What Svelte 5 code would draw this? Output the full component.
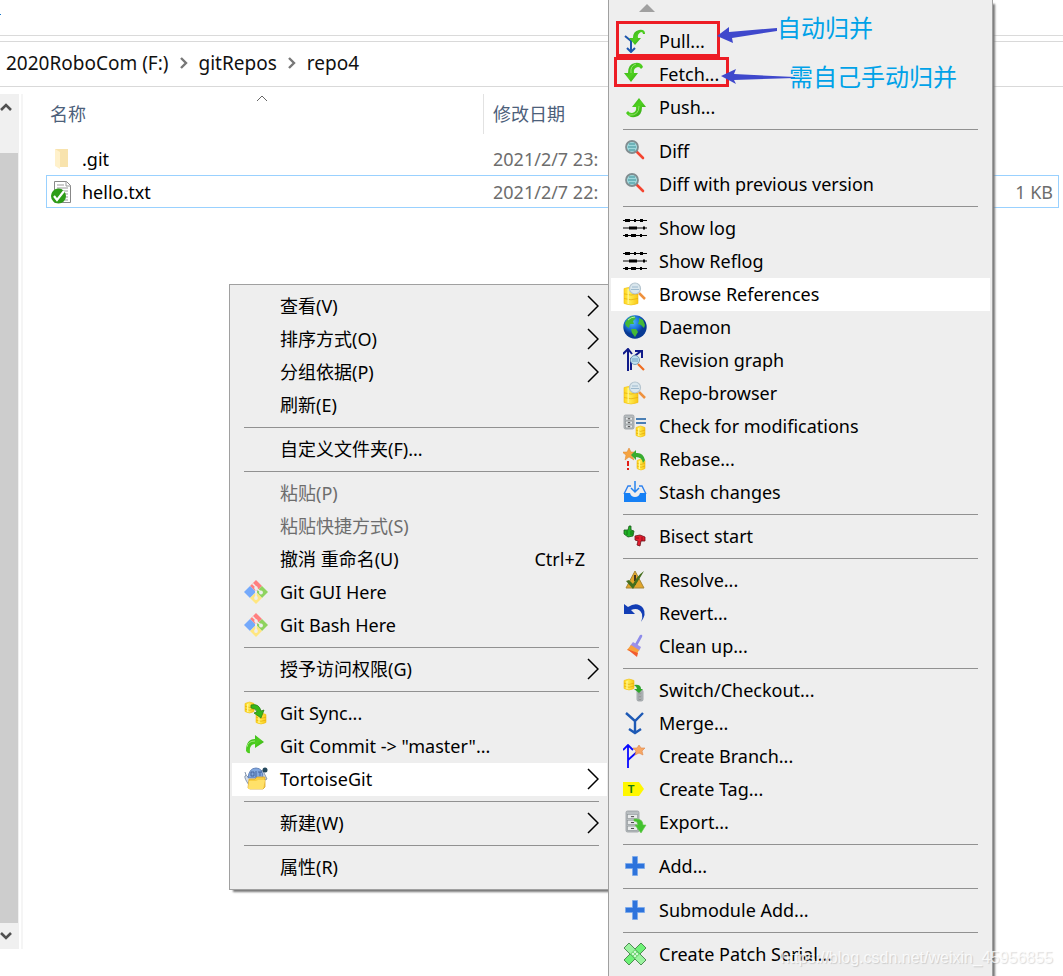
<script>
    let files = [
        { name: '.git', icon: 'folder', date: '2021/2/7 23:', size: '' },
        { name: 'hello.txt', icon: 'file', date: '2021/2/7 22:', size: '1 KB', selected: true },
    ];

    let path = ['2020RoboCom (F:)', 'gitRepos', 'repo4'];

    // a null entry is a separator line
    let contextMenu = [
        { label: '查看(V)', sub: true },
        { label: '排序方式(O)', sub: true },
        { label: '分组依据(P)', sub: true },
        { label: '刷新(E)' },
        null,
        { label: '自定义文件夹(F)...' },
        null,
        { label: '粘贴(P)', disabled: true },
        { label: '粘贴快捷方式(S)', disabled: true },
        { label: '撤消 重命名(U)', shortcut: 'Ctrl+Z' },
        { label: 'Git GUI Here', icon: 'git' },
        { label: 'Git Bash Here', icon: 'git' },
        null,
        { label: '授予访问权限(G)', sub: true },
        null,
        { label: 'Git Sync...', icon: 'sync' },
        { label: 'Git Commit -> "master"...', icon: 'commit' },
        { label: 'TortoiseGit', icon: 'tortoise', sub: true, active: true },
        null,
        { label: '新建(W)', sub: true },
        null,
        { label: '属性(R)' },
    ];

    let tortoiseMenu = [
        { label: 'Pull...', icon: 'pull' },
        { label: 'Fetch...', icon: 'fetch' },
        { label: 'Push...', icon: 'push' },
        null,
        { label: 'Diff', icon: 'diff' },
        { label: 'Diff with previous version', icon: 'diff' },
        null,
        { label: 'Show log', icon: 'log' },
        { label: 'Show Reflog', icon: 'log' },
        { label: 'Browse References', icon: 'browse', active: true },
        { label: 'Daemon', icon: 'globe' },
        { label: 'Revision graph', icon: 'graph' },
        { label: 'Repo-browser', icon: 'browse' },
        { label: 'Check for modifications', icon: 'check' },
        { label: 'Rebase...', icon: 'rebase' },
        { label: 'Stash changes', icon: 'stash' },
        null,
        { label: 'Bisect start', icon: 'bisect' },
        null,
        { label: 'Resolve...', icon: 'resolve' },
        { label: 'Revert...', icon: 'revert' },
        { label: 'Clean up...', icon: 'clean' },
        null,
        { label: 'Switch/Checkout...', icon: 'switch' },
        { label: 'Merge...', icon: 'merge' },
        { label: 'Create Branch...', icon: 'branch' },
        { label: 'Create Tag...', icon: 'tag' },
        { label: 'Export...', icon: 'export' },
        null,
        { label: 'Add...', icon: 'add' },
        null,
        { label: 'Submodule Add...', icon: 'add' },
        null,
        { label: 'Create Patch Serial...', icon: 'patch' },
    ];
</script>

{#snippet cylinder(x, y, w, h)}
    <path d="M{x} {y + 1.5}q{w / 2} -3 {w} 0v{h - 3}q{-w / 2} 3 {-w} 0z" fill="url(#gold)" stroke="#eebd18" stroke-width=".6" />
    <path d="M{x} {y + h * 0.38}q{w / 2} 2.500 {w} 0M{x} {y + h * 0.64}q{w / 2} 2.500 {w} 0" fill="none" stroke="#e3a90c" stroke-width=".7" />
    <path d="M{x + w * 0.3} {y + 2}v{h - 3}" stroke="#fff79a" stroke-width="1.200" />
{/snippet}

{#snippet cabinet(x, y, w, h)}
    <rect {x} {y} width={w} height={h} rx="1.5" fill="#b9bec1" stroke="#959b9e" stroke-width=".8" />
    {#each [0.16, 0.44, 0.72] as row}
        <rect x={x + 1.6} y={y + h * row} width={w - 3.2} height={h * 0.2} fill="#e8eaeb" stroke="#8d9396" stroke-width=".6" />
        <path d="M{x + w * 0.38} {y + h * (row + 0.11)}h{w * 0.24}" stroke="#444" stroke-width="1" />
    {/each}
{/snippet}

{#snippet icon(name)}
    <svg class="icon" viewBox="0 0 24 24" aria-hidden="true">
        {#if name == 'git'}
            <path d="M12 0l6 6-5 5-2 0-5-5z" fill="#ff7f7f" />
            <path d="M18 6l6 6-6 6-5-5v-2z" fill="#8ed35f" />
            <path d="M6 6l5 5v2l-5 5-6-6z" fill="#74a9fb" />
            <path d="M11 13h2l5 5-6 6-6-6z" fill="#ffe680" />
            <path d="M8.500 3.500L12 7v11M12 8l5 4" fill="none" stroke="#eee" stroke-width="1.500" />
            <circle cx="12" cy="8" r="1.800" fill="#eee" />
            <circle cx="17" cy="12.500" r="1.900" fill="#eee" />
            <circle cx="12" cy="18" r="1.900" fill="#eee" />
        {:else if name == 'sync'}
            {@render cylinder(1, 1, 9, 11)}
            {@render cylinder(12, 12, 10, 11)}
            <path d="M7 4q8-2 10 6l3-1-3 8-7-5 3-1q-1-4-6-4z" fill="#36b818" stroke="#2d8118" stroke-width=".8" />
        {:else if name == 'commit'}
            <path d="M2 17Q2 5 11 5V1l9 7-9 6v-4q-6 0-5 9-2 1-4-2z" fill="url(#green)" />
            <path d="M3 13q1-6 8-6" fill="none" stroke="#9bee70" stroke-width="1" />
        {:else if name == 'tortoise'}
            <path d="M2 8l-1-3M4 10Q2 7 1 9t4 9M19 8l-3-5 3 1 2 4 2 4-4 2" fill="#d4dde9" stroke="#8294ad" stroke-width="1" />
            <path d="M4 11Q5 1 12 1t7 10z" fill="#81a7df" stroke="#5274ad" stroke-width=".8" />
            <path d="M7 5h3v4H7zM12 4v6M14 5h4M16 5v4" fill="none" stroke="#405f98" stroke-width=".9" />
            <circle cx="21" cy="3" r="2.500" fill="#25485c" />
            <path d="M4 21l1-9h6l2-2 8 0v10l-2 2H6z" fill="#f8ce42" stroke="#d6a22d" stroke-width=".8" />
            <path d="M4 22l1-8h7l2-1h7l-2 9z" fill="#ffe169" />
        {:else if name == 'pull'}
            <path d="M2 7l6 5 5-4M8 12v10M4 19l4 4 4-4" fill="none" stroke="#1d55ad" stroke-width="2" />
            <path d="M22 5Q22 0 16 1q-6 1-6 8H6l6 7 6-7h-3q-1-4 3-6 2 0 2 2z" fill="url(#green)" />
        {:else if name == 'fetch'}
            <path d="M20 5Q18 0 12 1 5 2 5 11H1l7 9 7-9h-4q-1-5 4-6 2 0 3 2z" fill="url(#green)" />
            <path d="M8 11q-1-7 5-9" fill="none" stroke="#94e66b" stroke-width="1" />
        {:else if name == 'push'}
            <path d="M3 18q3 5 9 4 7-1 7-10h4l-7-9-7 9h4q1 5-4 6-3 0-4-2z" fill="url(#green)" />
            <path d="M6 20q10 1 10-9" fill="none" stroke="#8fe368" stroke-width="1" />
        {:else if name == 'diff'}
            <path d="M14 13l6 6" stroke="#f44530" stroke-width="2.600" stroke-linecap="round" />
            <circle cx="9" cy="8" r="6" fill="#9ed7dc" stroke="#808d90" stroke-width="1.800" />
            <path d="M6 5h6M5 8h8M6 11h6" stroke="#3d8f95" stroke-width="1" />
        {:else if name == 'log'}
            <path d="M0 4.500h24M0 12h24M0 19.500h24" stroke="#000" stroke-width="1" />
            <path d="M2 4.500h5M11 4.500h2M17 4.500h3M6 12h8M20 12h2M2 19.500h3M8 19.500h5M17 19.500h2" stroke="#000" stroke-width="3" />
        {:else if name == 'browse'}
            {@render cylinder(1, 5, 14, 18)}
            <path d="M16 11l6 6" stroke="#ee913e" stroke-width="2.500" />
            <circle cx="12" cy="6.500" r="5.500" fill="#d9e6ed" stroke="#b4c4ce" stroke-width="1.200" />
            <path d="M9 5h6M8 7.500h8" stroke="#9ebace" stroke-width="1" />
        {:else if name == 'globe'}
            <circle cx="12" cy="12" r="11.700" fill="url(#ocean)" />
            <path d="M2 8q3-6 8-7l3 2-3 3 1 3-4 0-1 4-3-2zM16 3l4 2 2 5-1 3-3-3-3-1 1-3zM8 14l5 0 2 3-3 5-3-4z" fill="#44b836" />
            <path d="M5 5q3-3 7-3" fill="none" stroke="#b0f0a0" stroke-width="1" />
        {:else if name == 'graph'}
            <path d="M5 23V2M0 6l5-5 4 5M8 22V11l10-8M12 3h7v7" fill="none" stroke="#101b8a" stroke-width="2" />
            <path d="M15 16l6 6" stroke="#f06d22" stroke-width="2.200" />
            <circle cx="12" cy="12" r="4.500" fill="#bfe0ef" stroke="#779eb8" stroke-width="1" />
            <path d="M9 11h6M9 13h6" stroke="#5e94ba" stroke-width=".8" />
        {:else if name == 'check'}
            {@render cabinet(1, 1, 10, 14)}
            <path d="M13 5h10M13 9h10" stroke="#155ba1" stroke-width="1.600" />
            {@render cylinder(13, 12, 9, 11)}
        {:else if name == 'rebase'}
            <path d="M6 1l2 4h5l-4 3 2 5-5-3-4 3 1-5-4-3h5z" fill="#f5a340" stroke="#dc852c" stroke-width=".5" />
            {@render cylinder(14, 12, 8, 11)}
            <path d="M8 8l5-5v3q7-1 9 7l-2 3q-1-6-7-6v3z" fill="#38ac30" />
            <path d="M5 14v5M5 21v2" stroke="#e21d16" stroke-width="2" />
        {:else if name == 'stash'}
            <path d="M1 14l4-8h3M16 6h3l4 8" fill="none" stroke="#2e81ee" stroke-width="1.400" />
            <path d="M1 13h6q1 4 5 4t5-4h6v9H1z" fill="#1680f5" />
            <path d="M12 1v11M8 8l4 4 4-4" fill="none" stroke="#2684ef" stroke-width="1.500" />
        {:else if name == 'bisect'}
            <path d="M1 6l4 0 1-4 2 0 0 4 3 1-1 5-5 1-4-3z" fill="#20b525" stroke="#195919" stroke-width=".8" />
            <path d="M7 8h3M7 10h3M4 7v4" stroke="#116311" stroke-width=".8" />
            <path d="M12 12l5-1 5 2 0 4-4 0-1 5-3-1 1-4-3-1z" fill="#e31c2d" stroke="#6d121a" stroke-width=".8" />
            <path d="M13 14h3M19 13v4" stroke="#7d1018" stroke-width=".8" />
        {:else if name == 'resolve'}
            <path d="M12 3l9 17H3z" fill="#e3a62b" stroke="#a68738" stroke-width="1" />
            <path d="M12 7v6M12 15v2" stroke="#45351b" stroke-width="2" />
            <path d="M3 13l3-1 4 4Q14 8 21 3q-4 7-11 18z" fill="#456f1e" />
        {:else if name == 'revert'}
            <path d="M1 3v10h11L8 9q8-3 11 4 1 4-1 8 6-8 2-14Q14 0 5 6z" fill="#123db5" />
        {:else if name == 'clean'}
            <path d="M18 2l-5 9" stroke="#8d8bea" stroke-width="2.600" stroke-linecap="round" />
            <path d="M10 8l8 5-2 4-9-5z" fill="#9d90e8" />
            <path d="M8 11l8 5-2 4-10-4z" fill="#f8a13c" />
            <path d="M4 15l11 4-1 4z" fill="#f25b2f" />
        {:else if name == 'switch'}
            {@render cylinder(1, 1, 10, 11)}
            {@render cabinet(14, 12, 6, 11)}
            <path d="M11 7q7-1 7 4l2 0-4 4-5-4h3q0-2-3-4z" fill="#2ea52b" />
        {:else if name == 'merge'}
            <path d="M3 2l9 8 8-8M12 9v13M6 18l6 4 6-4" fill="none" stroke="#1d59b5" stroke-width="2.400" />
        {:else if name == 'branch'}
            <path d="M5 24V2M0 6l5-5 5 5M5 16l10-9" fill="none" stroke="#0808ff" stroke-width="1.800" />
            <path d="M16 1l2 3 4 0-3 3 1 4-4-2-4 2 1-4-3-3h4z" fill="#f7a765" stroke="#df8748" stroke-width=".6" />
        {:else if name == 'tag'}
            <path d="M0 5h16l5 7-5 7H0z" fill="#fff700" />
            <text class="tag-letter" x="8" y="16" text-anchor="middle">T</text>
        {:else if name == 'export'}
            {@render cabinet(3, 1, 13, 21)}
            <path d="M11 9q9-1 9 6h3l-5 8-6-8h3q0-4-4-4z" fill="#42c22e" stroke="#64c94c" stroke-width=".6" />
        {:else if name == 'add'}
            <path d="M9.500 2.500h5v7h7v5h-7v7h-5v-7h-7v-5h7z" fill="#2d73dc" stroke="#77a8ed" stroke-width=".7" />
        {:else if name == 'patch'}
            <path d="M18 1l5 5L6 23l-5-5z" fill="#6df276" stroke="#438148" stroke-width=".9" />
            <path d="M6 1l17 17-5 5L1 6z" fill="#9bf39f" stroke="#438148" stroke-width=".9" />
            <path d="M12 7l5 5-5 5-5-5z" fill="#76d97b" />
            <path d="M11 10h2M9 12h2M13 12h2M11 14h2" stroke="#efffef" stroke-width="1.500" />
        {:else if name == 'folder'}
            <path d="M5 2h13v18H7z" fill="#f8e3ad" />
            <path d="M5 2l5 3v17l-5-3z" fill="#fff1cb" />
        {:else if name == 'file'}
            <path d="M4.500 1.500h12l4 4v17h-16z" fill="#fff" stroke="#888" />
            <path d="M16 1v5h5M7 5h7M7 8h11M7 11h11M10 14h8M12 17h6M12 20h6" fill="none" stroke="#999" />
            <circle cx="8.500" cy="16" r="7.500" fill="#2d9c16" />
            <path d="M4 16l3 4 7-9" fill="none" stroke="#fff" stroke-width="2.200" />
        {/if}
    </svg>
{/snippet}

{#snippet menuItems(items)}
    {#each items as item}
        {#if item}
            <button class="item" class:active={item.active} role="menuitem" disabled={item.disabled}>
                {@render icon(item.icon)}
                <span class="label">{item.label}</span>
                {#if item.shortcut}
                    <span class="shortcut">{item.shortcut}</span>
                {/if}
                {#if item.sub}
                    <svg class="sub-arrow" viewBox="0 0 12 22" aria-hidden="true"><path d="M1 1l10 10L1 21" /></svg>
                {/if}
            </button>
        {:else}
            <hr />
        {/if}
    {/each}
{/snippet}

<svg class="defs" aria-hidden="true">
    <defs>
        <linearGradient id="green" x1="0" y1="0" x2="1" y2="1">
            <stop offset="0" stop-color="#32a51b" />
            <stop offset=".5" stop-color="#4fd11f" />
            <stop offset="1" stop-color="#2a9312" />
        </linearGradient>
        <linearGradient id="gold">
            <stop offset="0" stop-color="#ffd61f" />
            <stop offset=".4" stop-color="#ffec4f" />
            <stop offset="1" stop-color="#f9c615" />
        </linearGradient>
        <radialGradient id="ocean" cx=".4" cy=".3">
            <stop offset="0" stop-color="#4fb8ff" />
            <stop offset=".6" stop-color="#1a72dc" />
            <stop offset="1" stop-color="#083a94" />
        </radialGradient>
    </defs>
</svg>

<main>
    <div class="ribbon"><span class="tab-edge"></span></div>

    <nav class="address">
        {#each path as part, i}
            {#if i > 0}
                <svg class="crumb-arrow" viewBox="0 0 8 12" aria-hidden="true"><path d="M1 1l5 5-5 5" /></svg>
            {/if}
            <a href="#{part}">{part}</a>
        {/each}
    </nav>

    <div class="content">
        <div class="scrollbar">
            <button aria-label="Scroll up"><svg viewBox="0 0 12 10"><path d="M1 8l5-5 5 5" /></svg></button>
            <div class="track"><div class="thumb"></div></div>
            <button aria-label="Scroll down"><svg viewBox="0 0 12 10"><path d="M1 2l5 5 5-5" /></svg></button>
        </div>

        <div class="listing">
            <table>
                <thead>
                    <tr>
                        <th class="name">
                            名称
                            <svg class="sort" viewBox="0 0 12 7" aria-hidden="true"><path d="M1 6l5-5 5 5" /></svg>
                        </th>
                        <th class="date">修改日期</th>
                        <th class="size"></th>
                    </tr>
                </thead>
                <tbody>
                    {#each files as file}
                        <tr class:selected={file.selected}>
                            <td class="name"><div class="file">{@render icon(file.icon)}<span>{file.name}</span></div></td>
                            <td class="date">{file.date}</td>
                            <td class="size">{file.size}</td>
                        </tr>
                    {/each}
                </tbody>
            </table>
        </div>
    </div>

    <div class="menu context" role="menu">
        {@render menuItems(contextMenu)}
    </div>

    <div class="menu tortoise" role="menu">
        <div class="scroll-up"></div>
        {@render menuItems(tortoiseMenu)}
    </div>

    <!-- notes drawn over the menu -->
    <div class="box box-pull"></div>
    <div class="box box-fetch"></div>
    <svg class="arrows" viewBox="0 0 84 60" aria-hidden="true">
        <path d="M1 11l12-9 0 5 48-4v3l-45 7 1 5z" />
        <path d="M5 51l15-7-2 5 61 3v1l-61 2 2 4z" />
    </svg>
    <div class="note note-pull">自动归并</div>
    <div class="note note-fetch">需自己手动归并</div>
    <div class="watermark">https://blog.csdn.net/weixin_45956855</div>
</main>

<style>
    :global(body) {
        background: #fff;
    }

    main {
        position: relative;
        display: flex;
        flex-direction: column;
        min-height: 100vh;
        box-sizing: border-box;
        padding-bottom: 27px;
        overflow: hidden;
        font-family: "Noto Sans", "Noto Sans CJK SC", sans-serif;
        font-size: 18px;
        line-height: 24px;
        color: #000;
    }

    button {
        font: inherit;
        color: inherit;
        border: 0;
        padding: 0;
        background: none;
    }

    .defs {
        position: absolute;
        width: 0;
        height: 0;
    }

    .ribbon {
        height: 35px;
        border-bottom: 1px solid #dadada;
        margin-bottom: 5px;
    }

    .tab-edge {
        display: block;
        width: 1px;
        height: 1px;
        margin-top: 14px;
        background: #1979ca;
    }

    .address {
        display: flex;
        align-items: center;
        gap: 11px;
        box-sizing: border-box;
        height: 46px;
        padding: 0 0 2px 6px;
        border-top: 1px solid #d9d9d9;
        border-bottom: 1px solid #d9d9d9;
        font-size: 19px;
    }

    .address a {
        color: #111;
        text-decoration: none;
    }

    .crumb-arrow {
        width: 8px;
        height: 12px;
        fill: none;
        stroke: #777;
        stroke-width: 2.4;
    }

    .content {
        flex: 1;
        display: flex;
        padding-top: 7px;
    }

    .scrollbar {
        display: flex;
        flex-direction: column;
        width: 19px;
        background: #f0f0f0;
        margin-right: 2px;
    }

    .scrollbar button {
        display: flex;
        align-items: center;
        height: 26px;
    }

    .scrollbar svg {
        width: 12px;
        height: 10px;
        fill: none;
        stroke: #505050;
        stroke-width: 2.6;
    }

    .track {
        flex: 1;
        display: flex;
        padding: 33px 1px 0 0;
    }

    .thumb {
        flex: 1;
        background: #cdcdcd;
    }

    .listing {
        flex: 1;
        border-left: 2px solid #f5f5f5;
        padding: 0 4px 0 23px;
    }

    table {
        width: 100%;
        table-layout: fixed;
        border-spacing: 0;
    }

    th, td {
        padding: 0;
        text-align: left;
        font-weight: normal;
    }

    th {
        position: relative;
        height: 40px;
        color: #4c607a;
    }

    th.name {
        width: 433px;
        padding-left: 4px;
        border-right: 1px solid #e2e2e2;
    }

    th.date, td.date {
        padding-left: 9px;
    }

    .sort {
        position: absolute;
        left: 48%;
        top: 1px;
        width: 12px;
        height: 7px;
        fill: none;
        stroke: #666;
    }

    tbody::before {
        content: "";
        display: block;
        height: 9px;
    }

    td {
        height: 32px;
        color: #6d6d6d;
    }

    .selected td {
        height: 33px;
    }

    .file {
        display: flex;
        align-items: center;
        gap: 8px;
        padding-left: 4px;
        color: #000;
    }

    td.size {
        text-align: right;
        padding-right: 6px;
    }

    .selected {
        outline: 1px solid #99d1ff;
        outline-offset: -1px;
    }

    .icon {
        flex: none;
        width: 24px;
        height: 24px;
    }

    .tag-letter {
        font: bold 11px "Liberation Sans", sans-serif;
        fill: #1a7a1a;
    }

    .menu {
        position: absolute;
        box-sizing: border-box;
        background: #eee;
        border: 1px solid #a0a0a0;
        padding: 5px 2px;
        box-shadow: 3px 3px 2px -1px #777;
    }

    .context {
        left: 229px;
        top: 284px;
        width: 381px;
    }

    .tortoise {
        left: 608px;
        top: 0;
        bottom: 0;
        width: 385px;
        overflow: hidden;
        border-top: 0;
        border-bottom: 0;
        padding-top: 0;
    }

    .scroll-up {
        display: flex;
        height: 25px;
        padding-left: 28px;
    }

    .scroll-up::before {
        content: "";
        height: 0;
        margin-top: 4px;
        border: 8px solid transparent;
        border-top: 0;
        border-bottom-color: #a0a0a0;
    }

    .item {
        display: flex;
        align-items: center;
        width: 100%;
        height: 33px;
        padding: 0 8px 2px 12px;
        text-align: left;
    }

    .item:disabled {
        color: #6d6d6d;
    }

    .active {
        background: #fff;
    }

    .label {
        flex: 1;
        margin-left: 12px;
        white-space: nowrap;
    }

    .shortcut {
        margin-right: 14px;
    }

    .sub-arrow {
        width: 12px;
        height: 22px;
        fill: none;
        stroke: #000;
        stroke-width: 1.5;
    }

    hr {
        height: 1px;
        margin: 5px 8px 5px 12px;
        border: 0;
        background: #919191;
    }

    .tortoise hr {
        margin-right: 12px;
    }

    .box {
        position: absolute;
        box-sizing: border-box;
        border: 3px solid #ed1c24;
    }

    .box-pull {
        left: 616px;
        top: 21px;
        width: 104px;
        height: 36px;
    }

    .box-fetch {
        left: 614px;
        top: 57px;
        width: 115px;
        height: 30px;
    }

    .arrows {
        position: absolute;
        left: 716px;
        top: 25px;
        width: 84px;
        height: 60px;
        fill: #3f48cc;
    }

    .note {
        position: absolute;
        font-family: "Noto Sans CJK SC", sans-serif;
        font-size: 24px;
        line-height: 32px;
        color: #00a2e8;
        white-space: nowrap;
    }

    .note-pull {
        left: 777px;
        top: 11px;
    }

    .note-fetch {
        left: 789px;
        top: 60px;
    }

    .watermark {
        position: absolute;
        right: 10px;
        bottom: 6px;
        font-family: "Liberation Sans", sans-serif;
        font-size: 16px;
        line-height: 24px;
        color: rgba(255, 255, 255, 0.8);
        text-shadow: 1px 1px 1px rgba(0, 0, 0, 0.15);
    }
</style>
